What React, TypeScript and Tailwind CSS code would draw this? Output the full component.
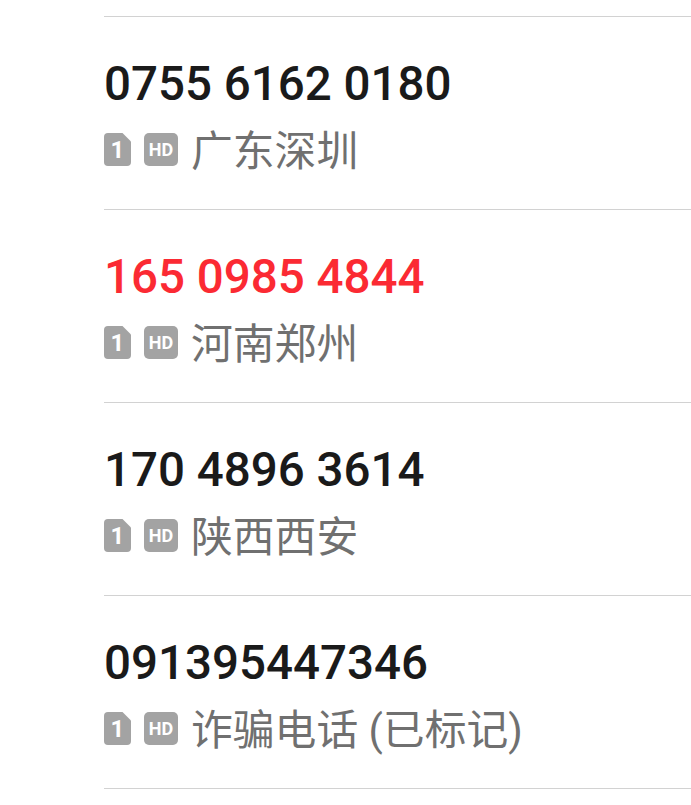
const font = "font-['Roboto','Noto_Sans_CJK_SC',sans-serif]";

const calls = [
  { number: "0755 6162 0180", place: "广东深圳" },
  { number: "165 0985 4844", place: "河南郑州", spam: true },
  { number: "170 4896 3614", place: "陕西西安" },
  { number: "091395447346", place: "诈骗电话 (已标记)" },
];

function SimBadge() {
  return (
    <div className="relative h-[33px] w-[27px] shrink-0">
      <svg width="27" height="33" viewBox="0 0 27 33" className="block">
        <path d="M4 0H18.5L27 8.5V29a4 4 0 0 1-4 4H4a4 4 0 0 1-4-4V4a4 4 0 0 1 4-4Z" fill="#a3a3a3" />
      </svg>
      <span className="absolute inset-0 flex items-center justify-center text-[24px] leading-none font-bold text-white">1</span>
    </div>
  );
}

function HdBadge() {
  return (
    <div className="flex h-[33px] w-[34px] shrink-0 items-center justify-center rounded-[5px] bg-[#a3a3a3] text-[18px] leading-none font-bold text-white">
      HD
    </div>
  );
}

function CallRow({ number, place, spam }: { number: string; place: string; spam?: boolean }) {
  return (
    <div className="flex h-[193px] flex-col border-b border-[#d2d2d2] pt-[37px]">
      <div className={`h-[61px] text-[47.5px] leading-[61px] font-medium ${spam ? "text-[#fb2a33]" : "text-[#1a1a1a]"}`}>
        {number}
      </div>
      <div className="mt-[10px] flex items-start">
        <div className="mt-[8px] flex">
          <SimBadge />
          <div className="ml-[13px]">
            <HdBadge />
          </div>
        </div>
        <span className="mt-[2px] ml-[13px] text-[41.8px] leading-[50px] text-[#707070]">{place}</span>
      </div>
    </div>
  );
}

export default function App() {
  return (
    <div className={`h-[805px] w-[691px] overflow-hidden bg-white pl-[104px] ${font}`}>
      <div className="mt-[16px] border-t border-[#d2d2d2]" />
      {calls.map((c) => (
        <CallRow key={c.number} {...c} />
      ))}
    </div>
  );
}
